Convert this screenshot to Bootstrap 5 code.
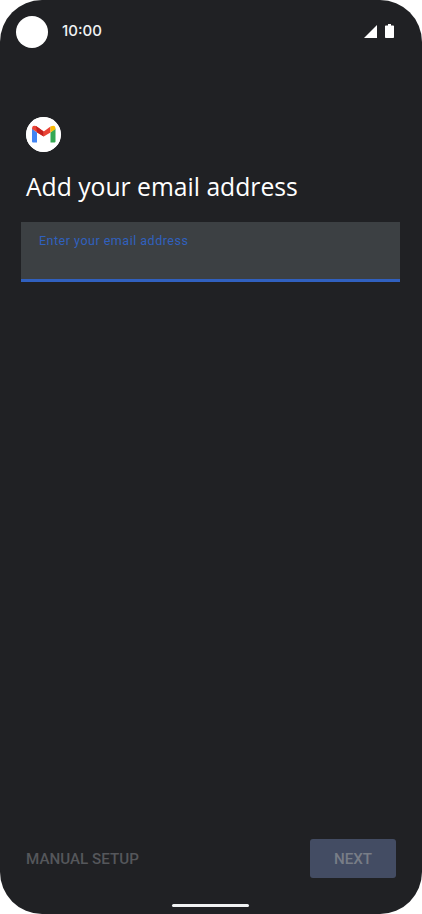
<!DOCTYPE html>
<html lang="en">

<head>
    <meta charset="UTF-8" />
    <meta name="viewport" content="width=device-width, initial-scale=1.0" />
    <title>Add your email address</title>
    <link rel="stylesheet" href="https://cdn.jsdelivr.net/npm/bootstrap@5.3.3/dist/css/bootstrap.min.css">
    <style>
        body { background: #fff; }
        .phone-screen { width: 422px; height: 914px; background: #202124; border-radius: 42px; font-family: Roboto, sans-serif; }
        .status-row { height: 60px; padding: 16px 28px 0 16px; }
        .camera-dot { width: 32px; height: 32px; background: #fff; border-radius: 50%; }
        .clock-text { font-family: Inter, sans-serif; font-size: 15px; font-weight: 500; line-height: 20px; color: #f1f3f4; margin: -3px 0 0 14px; }
        .setup-body { padding: 57px 22px 0 21px; }
        .mail-logo { width: 35px; height: 35px; margin-left: 5px; background: #fff; border-radius: 50%; }
        .setup-title { font-family: "Open Sans", sans-serif; font-size: 24.7px; font-weight: 400; line-height: 32px; color: #fff; margin: 19px 0 19px 5px; }
        .email-box { height: 60px; background: #3c4043; border-bottom: 3px solid #3060bf; padding: 11px 18px 0; }
        .email-label { font-size: 12.5px; line-height: 15px; letter-spacing: .5px; color: #3060bf; }
        .action-row { padding: 0 26px 26px; }
        .btn-manual { font-size: 15.2px; font-weight: 500; color: #55575b; padding: 1px 0 0; border: 0; }
        .btn-next { width: 86px; height: 39px; background: #434c63; color: #787d87; font-size: 15.2px; font-weight: 500; border: 0; border-radius: 3px; padding: 1px 0 0; }
        .home-bar { width: 77px; height: 3px; background: #f1f3f4; border-radius: 2px; margin: 0 0 7px 172px; }
    </style>
</head>

<body class="m-0">

    <div class="phone-screen d-flex flex-column overflow-hidden">
        <div class="status-row d-flex align-items-start justify-content-between">
            <div class="d-flex align-items-center">
                <div class="camera-dot"></div>
                <span class="clock-text">10:00</span>
            </div>
            <div class="d-flex align-items-center gap-2 mt-2">
                <svg width="13" height="13" viewBox="0 0 13 13"><path d="M13 0V13H0Z" fill="#fff" /></svg>
                <svg width="9" height="14" viewBox="0 0 9 14"><path d="M3 0H6V1.5H8.2Q9 1.5 9 2.3V13.2Q9 14 8.2 14H.8Q0 14 0 13.2V2.3Q0 1.5 .8 1.5H3Z" fill="#fff" /></svg>
            </div>
        </div>

        <div class="setup-body flex-grow-1">
            <svg class="mail-logo d-block" viewBox="0 0 35 35">
                <circle cx="17.5" cy="17.5" r="17.5" fill="#fff" />
                <path d="M6 11.5V24.5Q6 25.5 7 25.5H11V15.5Z" fill="#4285f4" />
                <path d="M29.5 11.5V24.5Q29.5 25.5 28.5 25.5H24.5V15.5Z" fill="#34a853" />
                <path d="M6 12Q6 7.5 10 9L17.7 14.5V19.5L6 12Z" fill="#ea4335" />
                <path d="M10 9L17.7 14.5V19.5L11 15.5Z" fill="#c5221f" />
                <path d="M17.7 14.5L24.5 9.5V15.5L17.7 19.5Z" fill="#ea4335" />
                <path d="M24.5 9.5Q29.5 7 29.5 12L24.5 15.5Z" fill="#fbbc04" />
            </svg>
            <h1 class="setup-title">Add your email address</h1>
            <div class="email-box">
                <div class="email-label">Enter your email address</div>
            </div>
        </div>

        <div class="action-row d-flex align-items-center justify-content-between">
            <button type="button" class="btn btn-manual">MANUAL SETUP</button>
            <button type="button" class="btn btn-next">NEXT</button>
        </div>
        <div class="home-bar"></div>
    </div>

</body>

</html>
